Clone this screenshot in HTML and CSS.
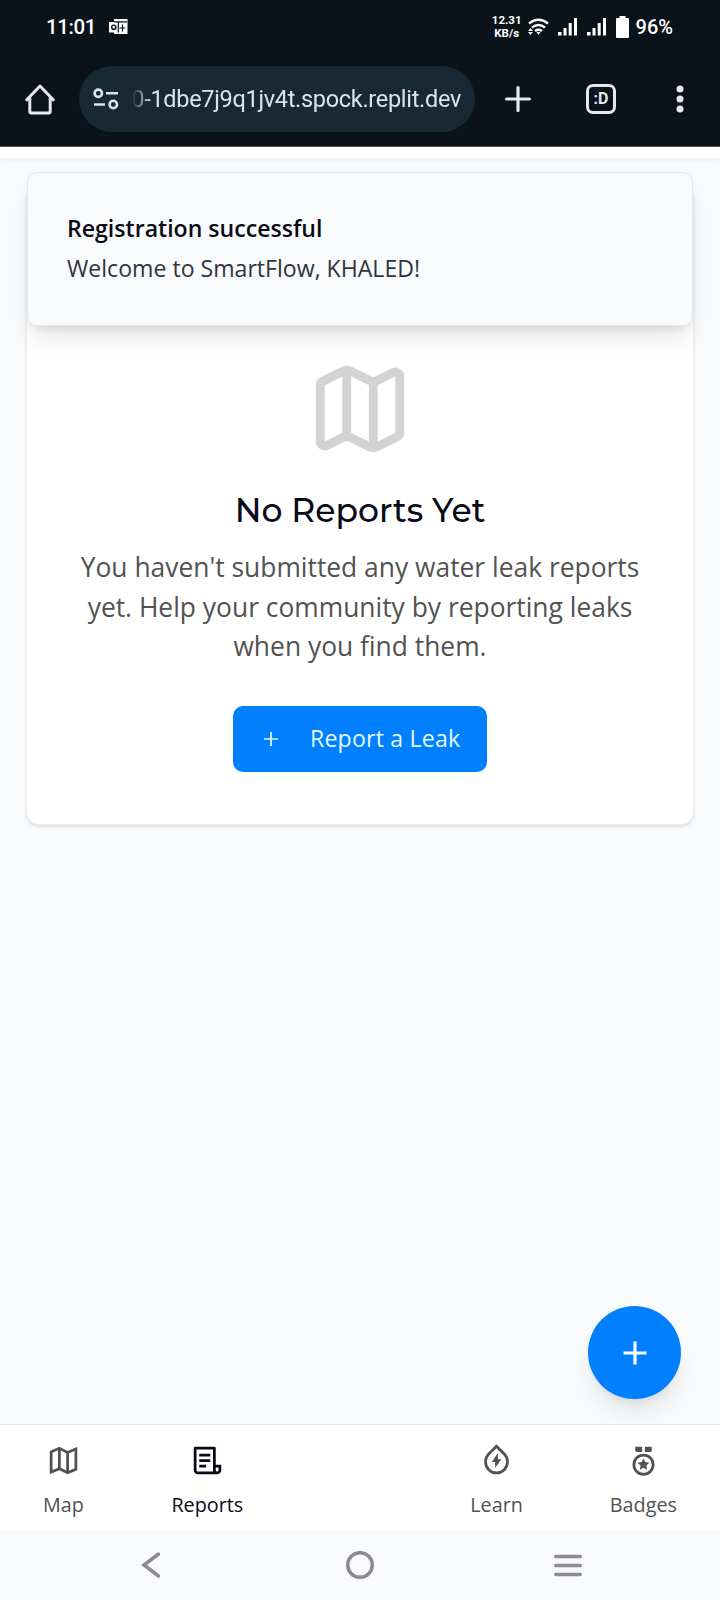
FILE: index.html
```html
<!DOCTYPE html>
<html lang="en">
<head>
<meta charset="utf-8">
<meta name="viewport" content="width=device-width">
<title>SmartFlow</title>
<link rel="stylesheet" href="styles.css">
</head>
<body>
<div class="phone">
  <header class="chrome">
    <div class="status">
      <span class="clock">11:01</span>
      <svg class="mail" width="19" height="16" viewBox="0 0 19 16"><path fill="#fff" d="M5 0h13.500v15H5v-1.500H0V3h5z"/><circle cx="4.800" cy="8.200" r="2.100" fill="none" stroke="#0b131a" stroke-width="1.400"/><path stroke="#0b131a" stroke-width="1.200" d="M13.500 5.500v7M10.500 9h6M5 2.900h13M9.300 3v10.500"/></svg>
      <span class="rate"><span>12.31</span><span>KB/s</span></span>
      <svg class="wifi" width="21" height="18" viewBox="0 0 21 18" fill="none" stroke="#fff" stroke-width="2.300"><path d="M1 5.500Q10.500-2 20 5.500M4 9.500q6.500-5 13 0M7 13q3.500-2.500 7 0"/><path fill="#fff" stroke="none" d="M8.500 14h4l-2 3zM0 13h5l-2.500-3zM0 14h5l-2.500 3z"/></svg>
      <svg class="signal" width="20" height="18" viewBox="0 0 20 18" fill="#fff"><path d="M0 14h3.500v3.500H0zM5.500 10h3v7.500h-3zM10.700 5h3v12.500h-3zM16 0h3v17.500h-3z"/></svg>
      <svg class="signal" width="20" height="18" viewBox="0 0 20 18" fill="#fff"><path d="M0 14h3.500v3.500H0zM5.500 10h3v7.500h-3zM10.700 5h3v12.500h-3zM16 0h3v17.500h-3z"/></svg>
      <svg class="battery" width="13" height="22" viewBox="0 0 13 22"><path fill="#fff" d="M3.500 0h6v2H12a1 1 0 0 1 1 1v18a1 1 0 0 1-1 1H1a1 1 0 0 1-1-1V3a1 1 0 0 1 1-1h2.500z"/></svg>
      <span class="percent">96%</span>
    </div>
    <div class="toolbar">
      <svg class="home" width="30" height="31" viewBox="0 0 30 31" fill="none" stroke="#e6e8ee" stroke-width="3" stroke-linejoin="round" stroke-linecap="round"><path d="M1.800 15.800 15 2l13.200 13.800M4.800 14v13.500q0 1.500 1.500 1.500h17.400q1.500 0 1.500-1.500V14"/></svg>
      <div class="url">
        <svg width="26" height="22" viewBox="0 0 26 22" fill="none" stroke="#dce4e9" stroke-width="2.600"><circle cx="5.300" cy="5.300" r="3.700"/><circle cx="20.300" cy="16.500" r="3.700"/><path d="M13 5.300h12M1 16.500h11"/></svg>
        <span class="address">0-1dbe7j9q1jv4t.spock.replit.dev</span>
      </div>
      <svg class="add" width="26" height="26" viewBox="0 0 26 26" stroke="#e6e8ee" stroke-width="3.200" stroke-linecap="round"><path d="M13 1.600v22.800M1.600 13h22.800"/></svg>
      <span class="tabs">:D</span>
      <svg class="more" width="8" height="28" viewBox="0 0 8 28" fill="#e6e8ee"><circle cx="4" cy="4" r="3.500"/><circle cx="4" cy="14" r="3.500"/><circle cx="4" cy="24" r="3.500"/></svg>
    </div>
  </header>
  <div class="appbar"></div>
  <main class="page">
    <section class="card">
      <svg class="map" width="106" height="106" viewBox="0 0 24 24" fill="none" stroke="#d3d3d3" stroke-width="2" stroke-linecap="round" stroke-linejoin="round"><path d="M14.106 5.553a2 2 0 0 0 1.788 0l3.659-1.830A1 1 0 0 1 21 4.619v12.764a1 1 0 0 1-.553.894l-4.553 2.277a2 2 0 0 1-1.788 0l-4.212-2.106a2 2 0 0 0-1.788 0l-3.659 1.830A1 1 0 0 1 3 19.381V6.618a1 1 0 0 1 .553-.894l4.553-2.277a2 2 0 0 1 1.788 0zM15 5.764v15M9 3.236v15"/></svg>
      <h1>No Reports Yet</h1>
      <p>You haven't submitted any water leak reports yet. Help your community by reporting leaks when you find them.</p>
      <button class="report"><svg width="14" height="14" viewBox="0 0 14 14" stroke="#e4f8ff" stroke-width="1.700"><path d="M7 0v14M0 7h14"/></svg><span>Report a Leak</span></button>
    </section>
    <div class="toast">
      <div class="toast-title">Registration successful</div>
      <div class="toast-text">Welcome to SmartFlow, KHALED!</div>
    </div>
    <button class="fab"><svg width="24" height="24" viewBox="0 0 24 24" stroke="#fff" stroke-width="3.200"><path d="M12 .5v23M.5 12h23"/></svg></button>
  </main>
  <nav class="tabbar">
    <a class="tab"><svg viewBox="0 0 24 24"><path d="M2 5l7-3 6 3 6.303-2.701a.5.5 0 0 1 .697.460V19l-7 3-6-3-6.303 2.701a.5.5 0 0 1-.697-.460V5zm14 14.395l4-1.714V5.033l-4 1.714v12.648zm-2-.131V6.736l-4-2v12.528l4 2zm-6-2.011V4.605L4 6.319v12.648l4-1.714z"/></svg><span>Map</span></a>
    <a class="tab active"><svg viewBox="0 0 24 24"><path d="M19 22H5a3 3 0 0 1-3-3V3a1 1 0 0 1 1-1h14a1 1 0 0 1 1 1v12h4v4a3 3 0 0 1-3 3zm-1-5v2a1 1 0 0 0 2 0v-2h-2zm-2 3V4H4v15a1 1 0 0 0 1 1h11zM6 7h8v2H6V7zm0 4h8v2H6v-2zm0 4h5v2H6v-2z"/></svg><span>Reports</span></a>
    <a class="tab learn"><svg viewBox="0 0 24 24"><path d="M12 3.100L7.050 8.050a7 7 0 1 0 9.900 0L12 3.100zm0-2.828l6.364 6.364a9 9 0 1 1-12.728 0L12 .272zM13 11h2.500L11 17.500V13H8.500L13 6.500V11z"/></svg><span>Learn</span></a>
    <a class="tab"><svg viewBox="0 0 24 24"><path fill-rule="evenodd" d="M12 7a8 8 0 1 1 0 16 8 8 0 0 1 0-16zm0 2a6 6 0 1 0 0 12 6 6 0 0 0 0-12z"/><path d="M12 10.500l1.323 2.680 2.957.430-2.140 2.085.505 2.946L12 17.250l-2.645 1.390.505-2.945-2.140-2.086 2.957-.430L12 10.500zM13 2h5v3l-1 .8H13zM11 2v3.800H7L6 5V2z"/></svg><span>Badges</span></a>
  </nav>
  <footer class="system">
    <svg width="28" height="28" viewBox="0 0 28 28"><path d="M20.500 3 6 14l14.500 11"/></svg>
    <svg width="28" height="28" viewBox="0 0 28 28"><circle cx="14" cy="14" r="12.300"/></svg>
    <svg width="28" height="28" viewBox="0 0 28 28"><path d="M1.800 5.500h24.400M1.800 14.500h24.400M1.800 23.500h24.400"/></svg>
  </footer>
</div>
</body>
</html>
```
FILE: styles.css
```css
* { box-sizing: border-box; }
body { margin: 0; background: #f8fafc; font-family: "Open Sans", "Noto Sans", sans-serif; }
svg { display: block; flex: none; }
button { border: 0; padding: 0; font: inherit; }
.phone { width: 720px; height: 1600px; display: flex; flex-direction: column; overflow: hidden; }

.chrome { height: 147px; background: #0b131a; border-bottom: 1px solid #55535c; font-family: Roboto, sans-serif; color: #fff; flex: none; }
.status { height: 54px; padding: 0 47px 0 46px; display: flex; align-items: center; }
.clock { font-size: 20.500px; font-weight: 500; letter-spacing: -.4px; }
.mail { margin-left: 13px; }
.rate { margin-left: auto; display: flex; flex-direction: column; align-items: center; font-size: 11.500px; font-weight: 700; line-height: 13px; }
.wifi { margin-left: 6px; }
.signal { margin-left: 9px; }
.battery { margin-left: 9px; }
.percent { margin-left: 7px; font-size: 20px; font-weight: 500; }
.toolbar { height: 90px; padding: 0 36px 0 25px; display: flex; align-items: center; }
.url { width: 396px; height: 66px; margin-left: 24px; padding: 0 14px; display: flex; align-items: center; gap: 13px; border-radius: 33px; background: #172a33; }
.address { flex: 1; display: flex; justify-content: flex-end; overflow: hidden; white-space: nowrap; font-size: 23.500px; line-height: 32px; letter-spacing: -.3px; color: #dce4e9; -webkit-mask-image: linear-gradient(90deg, transparent, #000 18px); mask-image: linear-gradient(90deg, transparent, #000 18px); }
.add { margin-left: 30px; }
.tabs { width: 30px; height: 30px; margin-left: 55px; border: 3px solid #e6e8ee; border-radius: 7px; font-size: 16px; line-height: 24px; font-weight: 700; text-align: center; color: #e6e8ee; }
.more { margin-left: auto; }

.appbar { height: 11px; flex: none; background: #fff; box-shadow: 0 1px 4px rgba(0, 0, 0, .08); }
.page { position: relative; height: 1266px; flex: none; padding: 26px 26px 0; }
.card { height: 641px; padding-top: 170.500px; display: flex; flex-direction: column; align-items: center; border: 1px solid #eceef1; border-radius: 13px; background: #fff; box-shadow: 0 2px 3px rgba(0, 0, 0, .1); }
h1 { margin: 25.500px 0 0; font-family: Montserrat, Inter, sans-serif; font-size: 33px; line-height: 46px; font-weight: 500; color: #080b17; }
p { width: 572px; margin: 15px 0 0; font-size: 26.400px; line-height: 39.600px; color: #525252; text-align: center; }
.report { width: 254px; height: 66px; margin-top: 39px; padding-left: 31px; display: flex; align-items: center; gap: 32px; border-radius: 10px; background: #0080ff; color: #e4f8ff; font-size: 23.100px; letter-spacing: .2px; white-space: nowrap; }
.report span { position: relative; top: -1px; }
.toast { position: absolute; left: 27px; top: 14px; width: 666px; height: 154px; padding: 39px; border: 1px solid #e5e7ec; border-radius: 10px; background: #f8fafc; box-shadow: 0 16px 25px -5px rgba(0, 0, 0, .1), 0 7px 10px -6px rgba(0, 0, 0, .12); font-size: 23.100px; }
.toast-title { line-height: 33px; font-weight: 600; color: #080b17; }
.toast-text { margin-top: 7px; line-height: 33px; color: #31343e; }
.fab { position: absolute; right: 39px; bottom: 25px; width: 93px; height: 93px; display: flex; align-items: center; justify-content: center; border-radius: 50%; background: #0080ff; box-shadow: 0 16px 25px -5px rgba(0, 0, 0, .1), 0 7px 10px -6px rgba(0, 0, 0, .1); }

.tabbar { position: relative; height: 107px; flex: none; padding: 19px 43px 0; display: flex; border-top: 1px solid #e2e5e9; background: #fff; }
.tab { display: flex; flex-direction: column; align-items: center; gap: 14px; font-size: 19.800px; line-height: 27px; color: #525252; }
.tab svg { width: 33px; height: 33px; fill: currentColor; }
.tab.active { margin-left: 87.500px; color: #080b17; }
.tab.learn { margin-left: auto; margin-right: 87px; }
.system { height: 69px; flex: none; padding: 0 138px 2px; display: flex; justify-content: space-between; align-items: center; background: #f8fafc; }
.system svg { fill: none; stroke: #8c8c8e; stroke-width: 3.500; stroke-linecap: round; }
```
